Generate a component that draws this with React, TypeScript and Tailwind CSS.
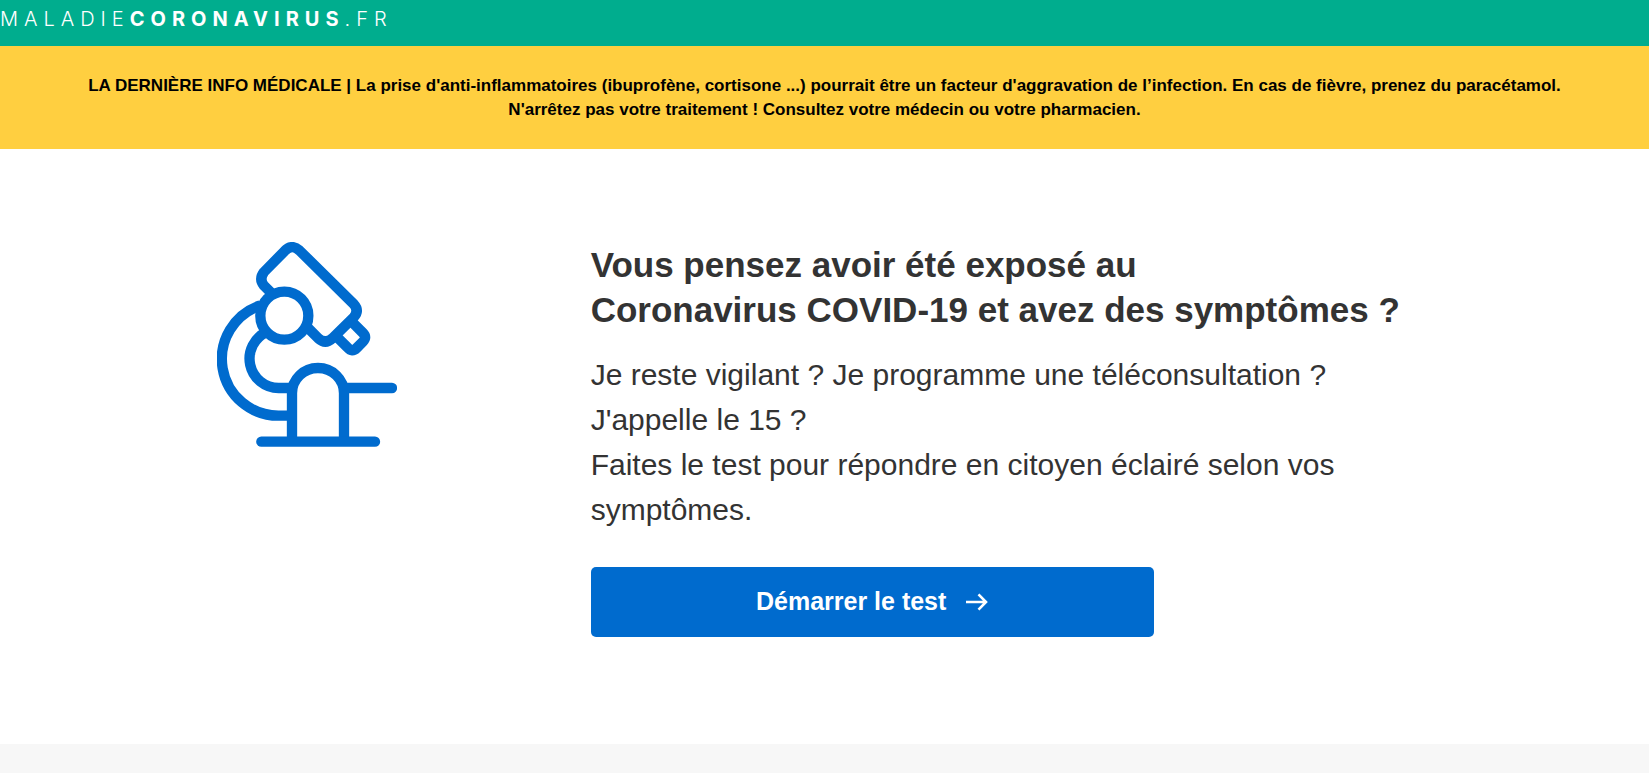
function Microscope() {
  return (
    <svg
      viewBox="0 0 540 616"
      fill="none"
      stroke="currentColor"
      strokeWidth="31"
      strokeLinecap="round"
      strokeLinejoin="round"
      className="w-[180px] text-[#006bce]"
      aria-hidden="true"
    >
      <g transform="translate(-48 -36)">
        {/* Tube */}
        <path strokeLinecap="butt" d="M214 192 L189 167 Q173 147 189 126 L250 64 Q272 40 295 61 L458 222 Q476 242 458 262 L394 325 Q373 344 352 325 L318 291" />
        {/* Objective */}
        <path strokeLinecap="butt" d="M455 278 L486 309 Q499 322 486 335 L467 354 Q453 368 440 353 L409 322" />
        {/* Focus knob */}
        <circle cx="250" cy="257" r="72" />
        {/* Arm */}
        <path strokeLinecap="butt" d="M178 226 A170 170 0 0 0 233 557 H273" />
        <path strokeLinecap="butt" d="M197 306 A88 88 0 0 0 233 474 H273" />
        {/* Base and stage */}
        <path strokeLinecap="butt" d="M273 635 V490 A78 76 0 0 1 429 490 V635" />
        <path d="M440 474 H573" />
        <path d="M181 635 H522" />
      </g>
    </svg>
  )
}

function ArrowRight() {
  return (
    <svg
      viewBox="0 0 22 18"
      fill="none"
      stroke="currentColor"
      strokeWidth="2.6"
      className="w-[22px]"
      aria-hidden="true"
    >
      <path d="M0 9 H20 M12.5 1.4 L20 9 L12.5 16.6" />
    </svg>
  )
}

export default function App() {
  return (
    <div className="min-h-screen bg-[#f7f7f7] font-['Liberation_Sans',Arial,sans-serif] text-[#333333]">
      <header className="h-[46px] bg-[#00ad8e] pt-[5px]">
        <a
          href="/"
          className="block whitespace-nowrap font-['Inter',sans-serif] text-[20px] leading-7 font-light tracking-[6px] text-white"
        >
          MALADIE<span className="font-bold">CORONAVIRUS</span>.FR
        </a>
      </header>

      <p className="bg-[#ffcf40] px-12 pt-7 pb-[27px] text-center text-[17px] leading-6 font-bold text-black">
        LA DERNIÈRE INFO MÉDICALE | La prise d'anti-inflammatoires (ibuprofène, cortisone ...) pourrait être un
        facteur d'aggravation de l’infection. En cas de fièvre, prenez du paracétamol.
        <br />
        N'arrêtez pas votre traitement ! Consultez votre médecin ou votre pharmacien.
      </p>

      <main className="bg-white px-12 pt-[93px] pb-[107px]">
        <div className="grid grid-cols-3">
          <div className="flex items-start justify-center">
            <Microscope />
          </div>
          <div className="col-span-2 pl-[25px]">
            <h1 className="text-[35px] leading-[45px] font-bold">
              Vous pensez avoir été exposé au
              <br />
              Coronavirus COVID-19 et avez des symptômes ?
            </h1>
            <p className="mt-5 max-w-[820px] text-[30px] leading-[45px]">
              Je reste vigilant ? Je programme une téléconsultation ? J'appelle le 15 ?
              <br />
              Faites le test pour répondre en citoyen éclairé selon vos symptômes.
            </p>
            <button
              type="button"
              className="mt-[35px] flex h-[70px] w-full max-w-[563px] items-center justify-center gap-5 rounded-[5px] bg-[#006bce] text-[25px] font-bold text-white"
            >
              Démarrer le test
              <ArrowRight />
            </button>
          </div>
        </div>
      </main>
    </div>
  )
}
